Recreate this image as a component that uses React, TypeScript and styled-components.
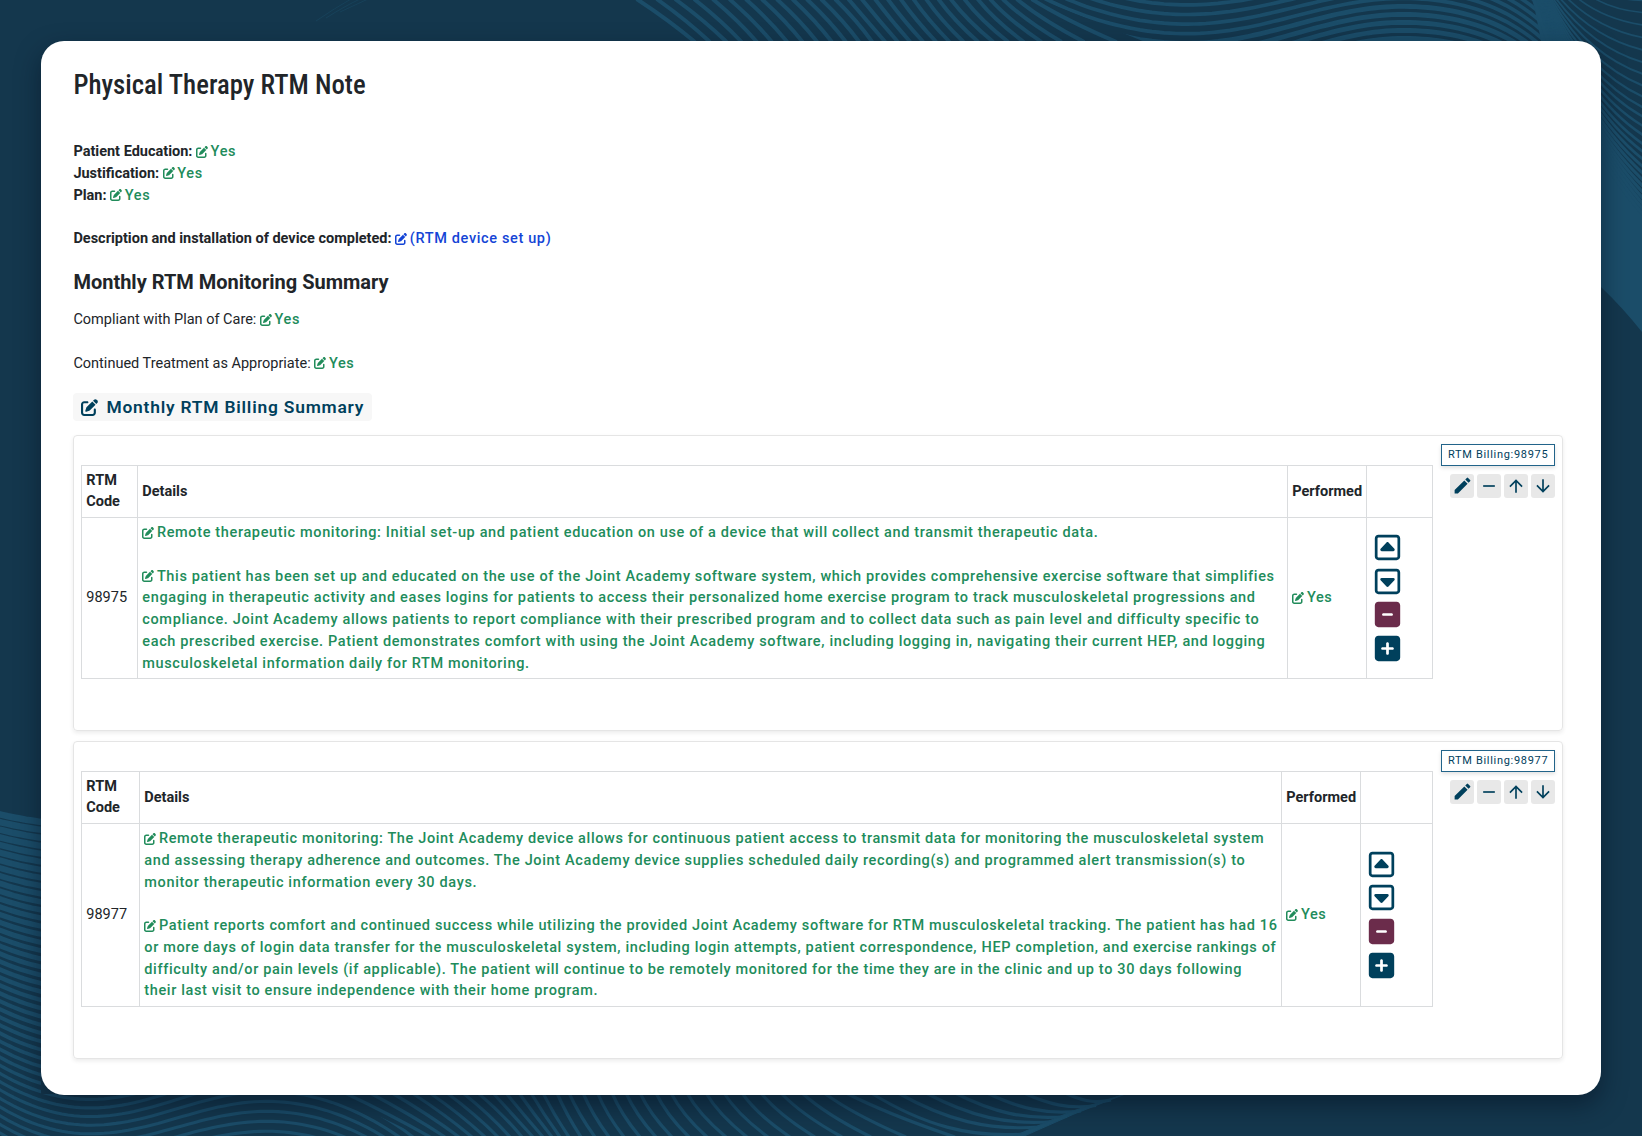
import React from "react";
import styled, { createGlobalStyle } from "styled-components";
import {
  FaPenToSquare,
  FaRegSquareCaretUp,
  FaRegSquareCaretDown,
  FaSquareMinus,
  FaSquarePlus,
} from "react-icons/fa6";
import { MdEdit, MdRemove, MdArrowUpward, MdArrowDownward } from "react-icons/md";

const GlobalStyle = createGlobalStyle`
  * { box-sizing: border-box; }
  body {
    margin: 0;
    background: #14374d;
    color: #212529;
    font: 400 14.5px/21.75px Roboto, "Liberation Sans", sans-serif;
  }
`;

const Page = styled.div`
  position: relative;
  width: 1642px;
  height: 1136px;
  padding: 41px;
  overflow: hidden;
`;

const Backdrop = styled.svg`
  position: absolute;
  inset: 0;
  width: 1642px;
  height: 1136px;
`;

const Card = styled.main`
  position: relative;
  width: 1560px;
  height: 1054px;
  padding: 28px 38px 0 32.4px;
  background: #fff;
  border-radius: 23px;
  box-shadow: 0 10px 24px rgba(6, 18, 34, 0.55);
`;

const Title = styled.h1`
  margin: 0 0 39.6px;
  font: 500 26.8px/32.4px "Roboto Condensed", Roboto, sans-serif;
`;

const Field = styled.div<{ $gap?: number }>`
  height: 21.75px;
  margin-bottom: ${(p) => p.$gap ?? 0}px;
  white-space: nowrap;
`;

const Label = styled.strong`
  font-weight: 700;
`;

const Heading = styled.h2`
  margin: 20px 0 15.4px;
  font-size: 20px;
  font-weight: 700;
  line-height: 24px;
`;

const Editable = styled.span<{ $tone?: "green" | "blue" }>`
  color: ${(p) => (p.$tone === "blue" ? "#1444d6" : "#218c5b")};
  font-weight: 500;
  letter-spacing: 0.64px;
  white-space: nowrap;

  svg {
    width: 12px;
    height: 12px;
    margin-right: 2.6px;
    vertical-align: -1.6px;
  }
`;

const BillingHeading = styled.h3`
  display: flex;
  align-items: center;
  width: 298.5px;
  height: 28px;
  margin: 19px 0 14px;
  padding-left: 8px;
  gap: 8px;
  background: #f7f7f7;
  border-radius: 4px;
  color: #00405c;
  font-size: 17.4px;
  font-weight: 600;
  letter-spacing: 0.79px;
  line-height: 28px;
`;

const Panels = styled.div`
  display: flex;
  flex-direction: column;
  gap: 10px;
`;

const Panel = styled.section<{ $height: number }>`
  display: flex;
  gap: 8px;
  width: 1489.6px;
  height: ${(p) => p.$height}px;
  padding: 29px 7px 0;
  border: 1px solid #e5e5e5;
  border-radius: 4px;
  box-shadow: 0 2px 4px rgba(0, 0, 0, 0.08);
`;

const Table = styled.table`
  table-layout: fixed;
  width: 1351px;
  height: fit-content;
  border-collapse: collapse;
`;

const cell = `
  padding: 3.85px 3.6px 3.75px 3.9px;
  border: 1px solid #dadcde;
  text-align: left;
  vertical-align: middle;
`;

const HeadCell = styled.th`
  ${cell}
  padding-top: 4px;
  padding-bottom: 5px;
  font-weight: 700;
  line-height: 21px;
`;

const Cell = styled.td`
  ${cell}
`;

const Paragraph = styled.p`
  margin: 0;

  & + & {
    margin-top: 21.75px;
  }
`;

const RowActions = styled.div`
  display: flex;
  flex-direction: column;
  gap: 4.6px;
  margin: 0 0 1px 2.1px;
`;

const RowAction = styled.span<{ $danger?: boolean }>`
  display: flex;
  width: 29px;
  height: 29px;
  color: ${(p) => (p.$danger ? "#6b2c4b" : "#00405c")};
`;

const Side = styled.aside`
  display: flex;
  flex-direction: column;
  align-items: flex-end;
  gap: 8px;
  margin-top: -21px;
`;

const Badge = styled.div`
  width: 114px;
  height: 22px;
  border: 1px solid #22648a;
  box-shadow: 0 2px 4px rgba(0, 0, 0, 0.12);
  color: #00405c;
  font-size: 11px;
  letter-spacing: 0.69px;
  line-height: 19px;
  padding-left: 5.5px;
  white-space: nowrap;
`;

const Tools = styled.div`
  display: flex;
  gap: 3px;
`;

const Tool = styled.span`
  display: flex;
  align-items: center;
  justify-content: center;
  width: 24px;
  height: 24px;
  padding-bottom: 1px;
  background: #e8e8e8;
  border-radius: 3px;
  color: #00405c;
`;

const INK = "#1b4d69";
const DEEP = "#14374d";

type Line = { d: string; w: number };

/* Diagonals along the top edge: [x at y=0, x at y=41] */
const topDiagonals: Line[] = [
  [50, 225], [110, 270], [165, 320], [222, 365], [278, 411], [328, 456], [377, 502], [425, 548],
  [470, 592], [517, 636], [560, 678], [603, 718], [645, 757], [685, 796], [725, 834], [765, 871],
  [803, 910], [842, 949], [880, 989], [918, 1031], [955, 1075], [992, 1120], [1033, 1165],
  [1073, 1212], [1110, 1265], [1148, 1325], [1190, 1393], [1235, 1490],
].map(([a, b], i) => {
  const x0 = 620 + a / 3;
  const x1 = 620 + b / 3;
  const bend = i < 13 ? 3 : -(i - 12) * 0.6;
  return { d: `M${x0} -1Q${(x0 + x1) / 2 + bend} 20 ${x1} 42`, w: 3.9 };
});

/* Waves with a trough at x=1187 and a crest at x=1403 */
const topWaves: Line[] = Array.from({ length: 19 }, (_, n) => {
  const k = n - 10;
  const trough = 33.7 + 9.6 * k;
  const crest = -1.6 + 8 * k;
  const pts: string[] = [];
  for (let x = 1020; x <= 1560; x += 6) {
    let y: number;
    if (x < 1187) y = trough - 0.00174 * (x - 1187) ** 2;
    else if (x < 1403) {
      const t = (1 - Math.cos((Math.PI * (x - 1187)) / 216)) / 2;
      y = trough + (crest - trough) * t;
    } else y = crest + 0.0018 * (x - 1403) ** 2 + 3.6e-8 * (x - 1403) ** 4;
    pts.push(`${x} ${y.toFixed(1)}`);
  }
  return { d: "M" + pts.join("L"), w: k > 0 ? 4.8 : 3.7 };
});

/* Fan on the right edge: height at the right edge, start x on the top edge */
const rightFan: Line[] = [
  [2, 1450], [38, 1360], [75, 1310], [113, 1278], [150, 1256], [187, 1243], [222, 1234], [257, 1228],
  [290, 1223], [322, 1220], [350, 1217], [378, 1214], [405, 1211], [432, 1208], [455, 1205],
  [478, 1202], [500, 1199], [520, 1196], [540, 1193], [559, 1190], [577, 1187], [595, 1184],
  [612, 1181], [628, 1178], [643, 1175],
].map(([e, s], i) => {
  const x0 = 1142 + s / 3;
  const y1 = e / 3;
  const slope = Math.min(0.05 + i * 0.05, 1.15);
  const dx = 1642 - x0;
  const cx = x0 + dx * 0.42;
  return {
    d: `M${x0} -1Q${cx} ${Math.max(y1 - slope * (1642 - cx), y1 * 0.35)} 1643 ${y1}`,
    w: 1.5 + i * 0.09,
  };
});

/* Waves in the lower left corner, trough x=90, crest x=267 */
const bottomWaves: Line[] = Array.from({ length: 44 }, (_, k) => {
  const trough = 825 + k * 8.05 + k * k * 0.008;
  const f = Math.min(1, (trough - 825) / 290);
  const c = 0.0013 + 0.002 * f;
  const crest = trough - 33 + (trough - 1130) * 0.15;
  const pts: string[] = [];
  for (let x = -4; x <= 440; x += 6) {
    let y: number;
    if (x < 90) y = trough - c * (x - 90) ** 2;
    else if (x < 267) {
      const t = (1 - Math.cos((Math.PI * (x - 90)) / 177)) / 2;
      y = trough + (crest - trough) * t;
    } else y = crest + 0.0026 * (x - 267) ** 2;
    pts.push(`${x} ${y.toFixed(1)}`);
  }
  return { d: "M" + pts.join("L"), w: 6.6 - 3.5 * f };
});

/* Diagonals along the bottom edge: [x at y=1095, x at y=1136] */
const bottomDiagonals: Line[] = [
  [345, 430], [370, 445], [392, 459], [412, 472], [430, 485], [447, 498], [463, 510], [478, 522],
  [493, 533], [506, 543], [519, 552], [531, 560], [543, 569], [557, 581], [569, 595], [583, 609],
  [597.5, 624], [612, 640], [626, 656], [640, 672], [656, 689], [671, 707], [687, 726], [706, 747],
  [724, 768], [742, 790], [761, 815], [781, 842], [802, 871], [824, 906], [846, 955],
].map(([a, b], i) => {
  const bend = i < 8 ? 4 : -(i - 8) * 0.5;
  return { d: `M${a} 1093Q${(a + b) / 2 + bend} 1115 ${b} 1137`, w: 3.2 };
});

const bottomTail: Line[] = [
  [871, 1022, 1136], [898, 1036, 1129], [926, 1050, 1123.5], [955, 1063, 1118.5], [987, 1077, 1113],
  [1024, 1092, 1107.5], [1065, 1107, 1102],
].map(([a, x, y]) => ({
  d: `M${a} 1093C${a + (x - a) * 0.35} ${1093 + (y - 1093) * 0.75} ${a + (x - a) * 0.65} ${y + 2} ${x + 4} ${y - 2}`,
  w: 3.2,
}));

const Lines = ({ items }: { items: Line[] }) => (
  <>
    {items.map((l, i) => (
      <path key={i} d={l.d} strokeWidth={l.w} />
    ))}
  </>
);

const Waves = () => (
  <Backdrop viewBox="0 0 1642 1136" fill="none" stroke={INK}>
    <defs>
      <clipPath id="topWaveArea">
        <path d="M1140 0H1536L1546 44H1150L1041 0Z" />
      </clipPath>
      <clipPath id="cornerArea">
        <path d="M0 809Q20 812 41 817V1094H333L420 1136H0Z" />
      </clipPath>
    </defs>
    <g strokeWidth="1" opacity="0.45">
      <path d="M316 21Q335 8 351 -1M326 18Q345 6 360 -1M340 12L368 -1" />
    </g>
    <Lines items={topDiagonals} />
    <g clipPath="url(#topWaveArea)">
      <Lines items={topWaves} />
    </g>
    <path d="M1533 0H1549Q1558 36 1610 118L1642 213V332Q1623 308 1601 287L1541 41Z" fill={INK} stroke="none" />
    <path d="M1549 0H1642V213Q1620 182 1601 140L1558 41Z" fill={DEEP} stroke="none" />
    <Lines items={rightFan} />
    <g clipPath="url(#cornerArea)">
      <Lines items={bottomWaves} />
    </g>
    <Lines items={bottomDiagonals} />
    <Lines items={bottomTail} />
    <path d="M1128 1093L1070 1112L1012 1137H1022L1074 1114Z" fill={INK} />
  </Backdrop>
);

const Value = ({ children, tone }: { children: React.ReactNode; tone?: "green" | "blue" }) => (
  <Editable $tone={tone}>
    <FaPenToSquare />
    {children}
  </Editable>
);

type Billing = { code: string; height: number; columns: number[]; details: string[][] };

const billings: Billing[] = [
  {
    code: "98975",
    height: 296,
    columns: [56, 1150, 79, 66],
    details: [
      [
        "Remote therapeutic monitoring: Initial set-up and patient education on use of a device that will collect and transmit therapeutic data.",
      ],
      [
        "This patient has been set up and educated on the use of the Joint Academy software system, which provides comprehensive exercise software that simplifies",
        "engaging in therapeutic activity and eases logins for patients to access their personalized home exercise program to track musculoskeletal progressions and",
        "compliance. Joint Academy allows patients to report compliance with their prescribed program and to collect data such as pain level and difficulty specific to",
        "each prescribed exercise. Patient demonstrates comfort with using the Joint Academy software, including logging in, navigating their current HEP, and logging",
        "musculoskeletal information daily for RTM monitoring.",
      ],
    ],
  },
  {
    code: "98977",
    height: 317.5,
    columns: [58, 1142, 79, 72],
    details: [
      [
        "Remote therapeutic monitoring: The Joint Academy device allows for continuous patient access to transmit data for monitoring the musculoskeletal system",
        "and assessing therapy adherence and outcomes. The Joint Academy device supplies scheduled daily recording(s) and programmed alert transmission(s) to",
        "monitor therapeutic information every 30 days.",
      ],
      [
        "Patient reports comfort and continued success while utilizing the provided Joint Academy software for RTM musculoskeletal tracking. The patient has had 16",
        "or more days of login data transfer for the musculoskeletal system, including login attempts, patient correspondence, HEP completion, and exercise rankings of",
        "difficulty and/or pain levels (if applicable). The patient will continue to be remotely monitored for the time they are in the clinic and up to 30 days following",
        "their last visit to ensure independence with their home program.",
      ],
    ],
  },
];

const BillingPanel = ({ code, height, columns, details }: Billing) => (
  <Panel $height={height}>
    <Table>
      <colgroup>
        {columns.map((w, i) => (
          <col key={i} width={w} />
        ))}
      </colgroup>
      <thead>
        <tr>
          <HeadCell>RTM Code</HeadCell>
          <HeadCell>Details</HeadCell>
          <HeadCell>Performed</HeadCell>
          <HeadCell />
        </tr>
      </thead>
      <tbody>
        <tr>
          <Cell>{code}</Cell>
          <Cell>
            {details.map((lines, i) => (
              <Paragraph key={i}>
                <Value>
                  {lines.map((line, j) => (
                    <React.Fragment key={j}>
                      {j > 0 && <br />}
                      {line}
                    </React.Fragment>
                  ))}
                </Value>
              </Paragraph>
            ))}
          </Cell>
          <Cell>
            <Value>Yes</Value>
          </Cell>
          <Cell>
            <RowActions>
              <RowAction><FaRegSquareCaretUp size={29} /></RowAction>
              <RowAction><FaRegSquareCaretDown size={29} /></RowAction>
              <RowAction $danger><FaSquareMinus size={29} /></RowAction>
              <RowAction><FaSquarePlus size={29} /></RowAction>
            </RowActions>
          </Cell>
        </tr>
      </tbody>
    </Table>
    <Side>
      <Badge>RTM Billing:{code}</Badge>
      <Tools>
        <Tool><MdEdit size={21} /></Tool>
        <Tool><MdRemove size={20} /></Tool>
        <Tool><MdArrowUpward size={20} /></Tool>
        <Tool><MdArrowDownward size={20} /></Tool>
      </Tools>
    </Side>
  </Panel>
);

export default function App() {
  return (
    <Page>
      <GlobalStyle />
      <Waves />
      <Card>
        <Title>Physical Therapy RTM Note</Title>
        <Field><Label>Patient Education:</Label> <Value>Yes</Value></Field>
        <Field><Label>Justification:</Label> <Value>Yes</Value></Field>
        <Field $gap={21.75}><Label>Plan:</Label> <Value>Yes</Value></Field>
        <Field>
          <Label>Description and installation of device completed:</Label>{" "}
          <Value tone="blue">(RTM device set up)</Value>
        </Field>
        <Heading>Monthly RTM Monitoring Summary</Heading>
        <Field $gap={21.75}>Compliant with Plan of Care: <Value>Yes</Value></Field>
        <Field>Continued Treatment as Appropriate: <Value>Yes</Value></Field>
        <BillingHeading>
          <FaPenToSquare size={17} />
          Monthly RTM Billing Summary
        </BillingHeading>
        <Panels>
          {billings.map((b) => (
            <BillingPanel key={b.code} {...b} />
          ))}
        </Panels>
      </Card>
    </Page>
  );
}
